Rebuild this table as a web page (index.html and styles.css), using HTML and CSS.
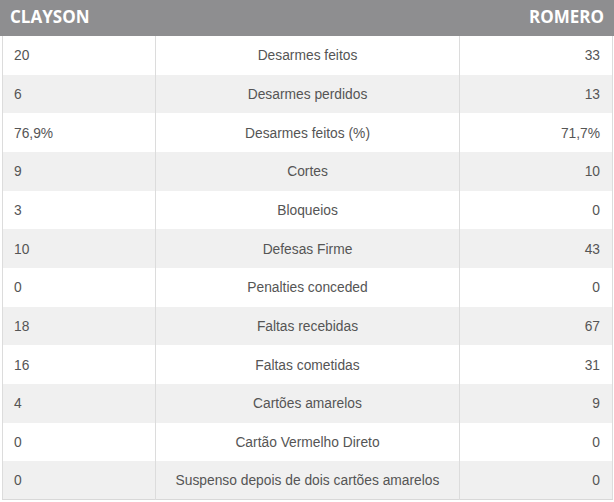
FILE: index.html
```html
<!DOCTYPE html>
<html>
<head>
<meta charset="utf-8">
<link rel="stylesheet" href="styles.css">
</head>
<body>
<div class="stats">
  <div class="head">
    <span class="player">CLAYSON</span>
    <span class="player">ROMERO</span>
  </div>
  <table class="grid">
    <colgroup>
      <col class="col-side">
      <col class="col-mid">
      <col class="col-side">
    </colgroup>
    <tbody>
      <tr><td class="l">20</td><td class="c">Desarmes feitos</td><td class="r">33</td></tr>
      <tr><td class="l">6</td><td class="c">Desarmes perdidos</td><td class="r">13</td></tr>
      <tr><td class="l">76,9%</td><td class="c">Desarmes feitos (%)</td><td class="r">71,7%</td></tr>
      <tr><td class="l">9</td><td class="c">Cortes</td><td class="r">10</td></tr>
      <tr><td class="l">3</td><td class="c">Bloqueios</td><td class="r">0</td></tr>
      <tr><td class="l">10</td><td class="c">Defesas Firme</td><td class="r">43</td></tr>
      <tr><td class="l">0</td><td class="c">Penalties conceded</td><td class="r">0</td></tr>
      <tr><td class="l">18</td><td class="c">Faltas recebidas</td><td class="r">67</td></tr>
      <tr><td class="l">16</td><td class="c">Faltas cometidas</td><td class="r">31</td></tr>
      <tr><td class="l">4</td><td class="c">Cartões amarelos</td><td class="r">9</td></tr>
      <tr><td class="l">0</td><td class="c">Cartão Vermelho Direto</td><td class="r">0</td></tr>
      <tr><td class="l">0</td><td class="c">Suspenso depois de dois cartões amarelos</td><td class="r">0</td></tr>
    </tbody>
  </table>
</div>
</body>
</html>
```

FILE: styles.css
```css
html, body {
  margin: 0;
  padding: 0;
  background: #ffffff;
}
.stats {
  width: 614px;
}
.head {
  display: flex;
  justify-content: space-between;
  align-items: center;
  height: 36px;
  background: #8e8e90;
  padding: 0 10px 0 10px;
  box-sizing: border-box;
}
.player {
  color: #ffffff;
  font-family: "Open Sans", "Liberation Sans", sans-serif;
  font-weight: 700;
  font-size: 17px;
  line-height: 20px;
  padding-bottom: 2px;
}
.grid {
  margin-left: 2px;
  width: 610px;
  border-collapse: collapse;
  table-layout: fixed;
  font-family: "Liberation Sans", Arial, sans-serif;
  font-size: 13.8px;
  color: #555555;
  border-left: 1px solid #dcdcdc;
  border-right: 1px solid #dcdcdc;
  border-bottom: 1px solid #d8d8d8;
}
.col-side {
  width: 153px;
}
.col-mid {
  width: 304px;
}
.grid tr {
  height: 38.67px;
}
.grid tr:nth-child(even) {
  background: #f0f0f0;
}
.grid td {
  padding: 1px 12px 0 12px;
  vertical-align: middle;
  white-space: nowrap;
  overflow: hidden;
}
.grid .l {
  text-align: left;
  border-right: 1px solid #dcdcdc;
  padding-left: 11px;
}
.grid .c {
  text-align: center;
  border-right: 1px solid #dcdcdc;
}
.grid .r {
  text-align: right;
}
```
